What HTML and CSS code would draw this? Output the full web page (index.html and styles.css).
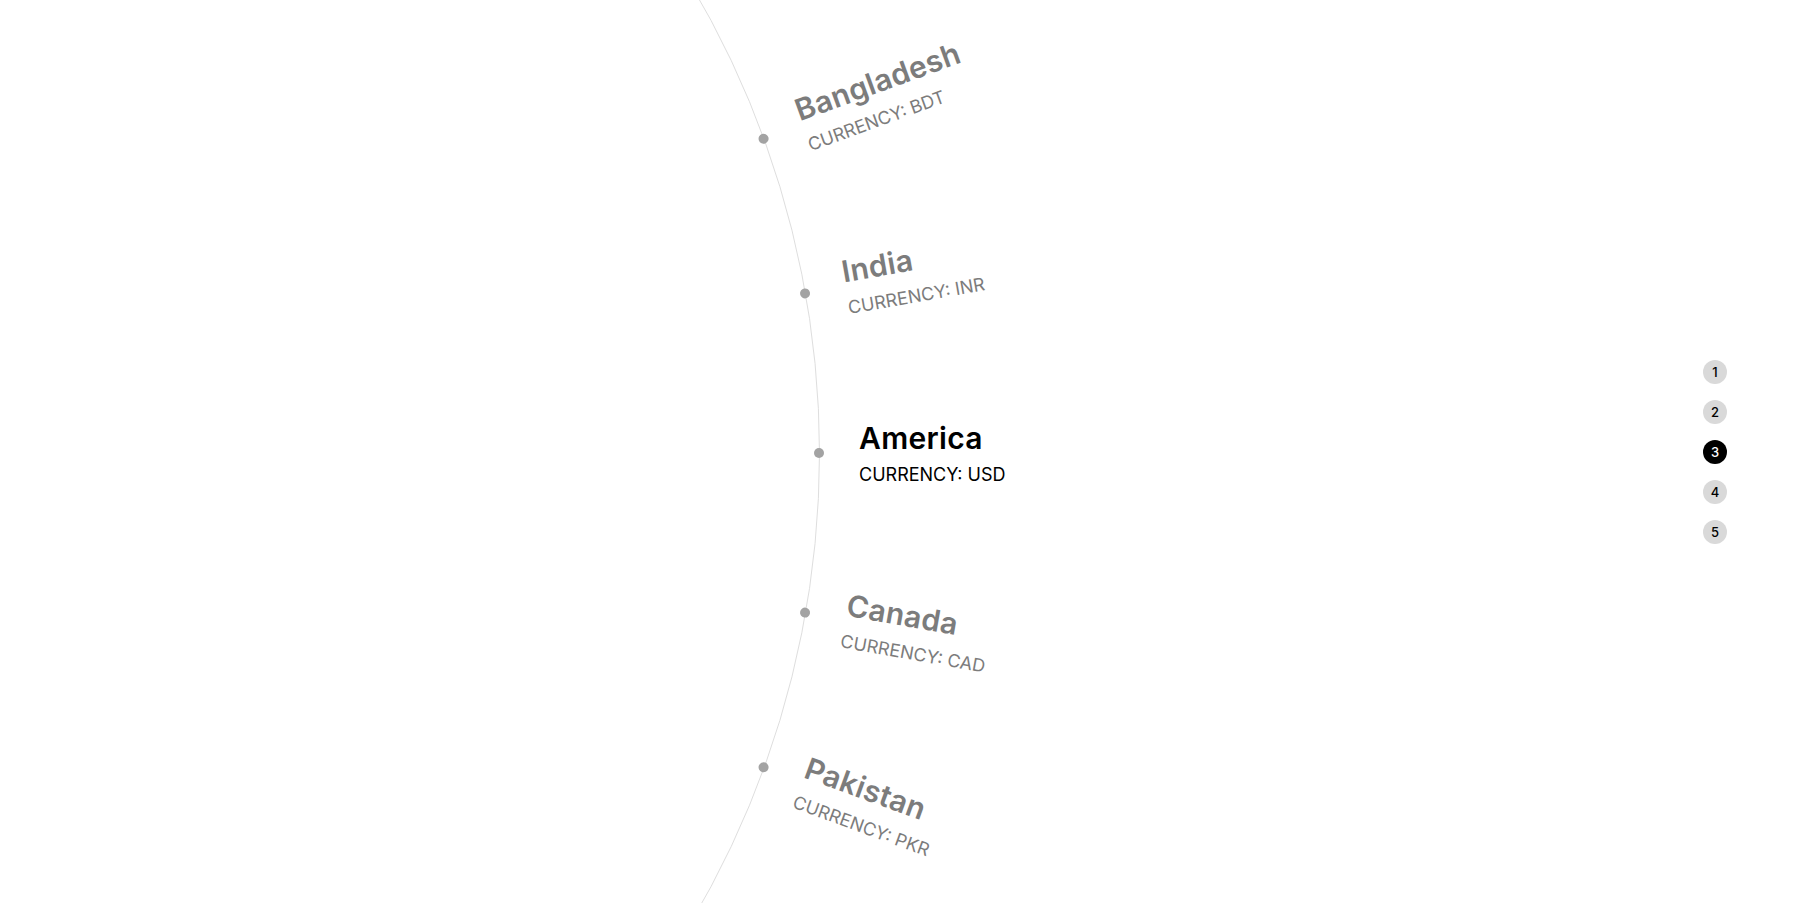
FILE: index.html
```html
<!DOCTYPE html>
<html lang="en">
<head>
<meta charset="utf-8">
<title>Currency Wheel</title>
<link rel="stylesheet" href="styles.css">
</head>
<body>
<main class="stage">
  <div class="wheel">
    <div class="ring"></div>
    <div class="item" style="transform: rotate(-20deg) translateX(914px)">
      <span class="dot"></span>
      <div class="label">
        <div class="title">Bangladesh</div>
        <div class="sub">CURRENCY: BDT</div>
      </div>
    </div>
    <div class="item" style="transform: rotate(-10deg) translateX(914px)">
      <span class="dot"></span>
      <div class="label">
        <div class="title">India</div>
        <div class="sub">CURRENCY: INR</div>
      </div>
    </div>
    <div class="item active" style="transform: rotate(0deg) translateX(914px)">
      <span class="dot"></span>
      <div class="label">
        <div class="title">America</div>
        <div class="sub">CURRENCY: USD</div>
      </div>
    </div>
    <div class="item" style="transform: rotate(10deg) translateX(914px)">
      <span class="dot"></span>
      <div class="label">
        <div class="title">Canada</div>
        <div class="sub">CURRENCY: CAD</div>
      </div>
    </div>
    <div class="item" style="transform: rotate(20deg) translateX(914px)">
      <span class="dot"></span>
      <div class="label">
        <div class="title">Pakistan</div>
        <div class="sub">CURRENCY: PKR</div>
      </div>
    </div>
  </div>
  <nav class="pager">
    <button class="page">1</button>
    <button class="page">2</button>
    <button class="page current">3</button>
    <button class="page">4</button>
    <button class="page">5</button>
  </nav>
</main>
</body>
</html>
```

FILE: styles.css
```css
* { box-sizing: border-box; }
html, body {
  margin: 0;
  padding: 0;
  background: #fff;
  width: 100%;
  height: 100%;
  overflow: hidden;
  font-family: Inter, "Noto Sans", sans-serif;
}
.stage {
  position: relative;
  width: 100vw;
  height: 100vh;
  overflow: hidden;
}
.wheel {
  position: absolute;
  left: -100px;
  top: 453px;
  width: 0;
  height: 0;
}
.ring {
  position: absolute;
  left: -919.5px;
  top: -919.5px;
  width: 1839px;
  height: 1839px;
  border: 1px solid #dedede;
  border-radius: 50%;
}
.item {
  position: absolute;
  left: 0;
  top: -34px;
  height: 68px;
  display: flex;
  align-items: center;
  gap: 35px;
  transform-origin: 0 34px;
  white-space: nowrap;
  color: #7c7c7c;
}
.dot {
  width: 10px;
  height: 10px;
  border-radius: 50%;
  background: #a3a3a3;
  flex: none;
}
.label {
  display: flex;
  flex-direction: column;
  gap: 6px;
}
.title {
  font-size: 30px;
  line-height: 38px;
  font-weight: 600;
  letter-spacing: 0.3px;
}
.sub {
  font-size: 18px;
  line-height: 24px;
  font-weight: 400;
  letter-spacing: 0;
}
.item.active { color: #000; }
.pager {
  position: absolute;
  right: 79px;
  top: 50%;
  transform: translateY(-50%);
  display: flex;
  flex-direction: column;
  gap: 16px;
}
.page {
  width: 24px;
  height: 24px;
  border: 0;
  padding: 0;
  border-radius: 50%;
  background: #d9d9d9;
  color: #000;
  font-family: Inter, "Noto Sans", sans-serif;
  font-size: 13px;
  font-weight: 500;
  display: flex;
  align-items: center;
  justify-content: center;
}
.page.current {
  background: #000;
  color: #fff;
}
```
